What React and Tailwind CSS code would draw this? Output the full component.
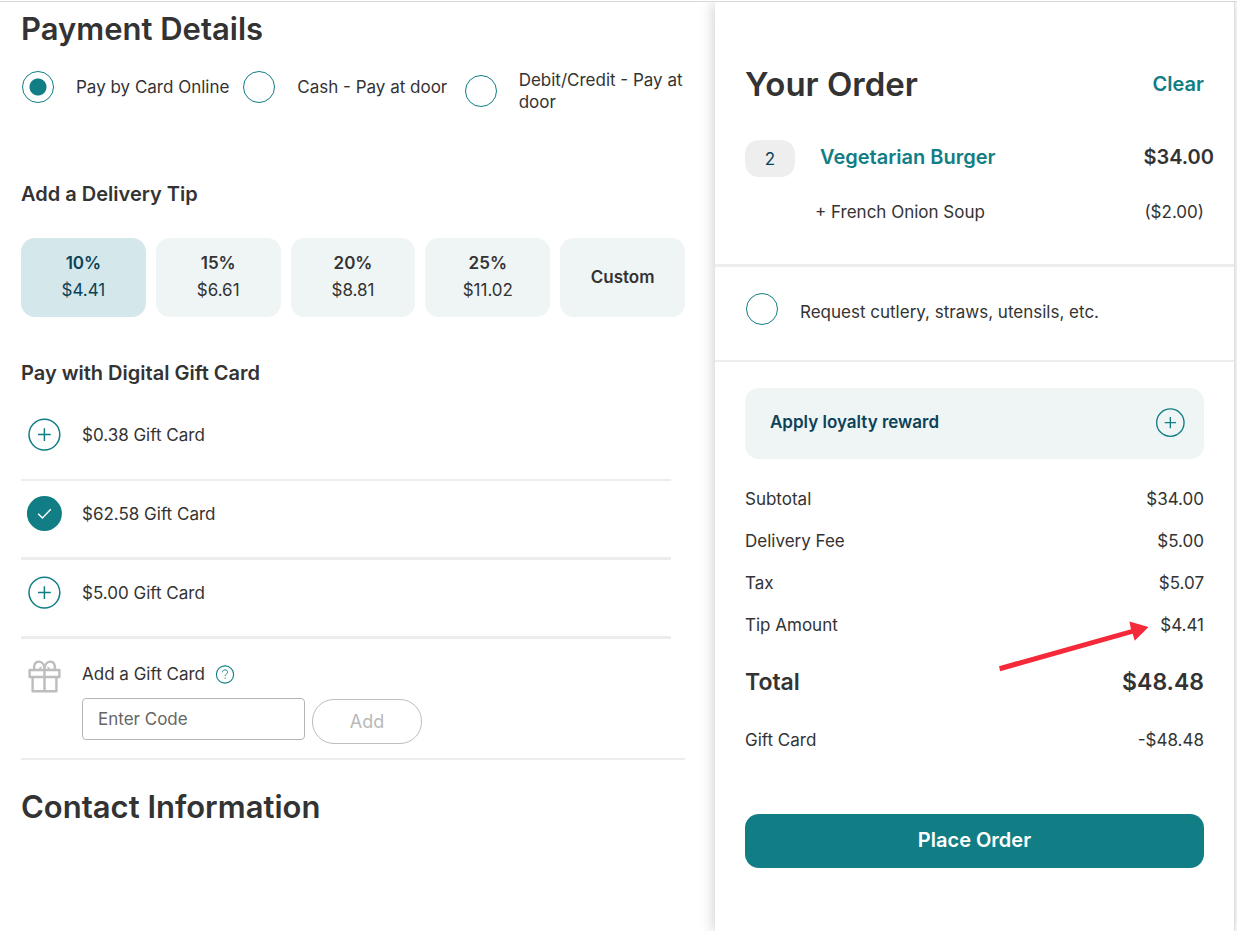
import { useState } from "react";

const paymentMethods = ["Pay by Card Online", "Cash - Pay at door", "Debit/Credit - Pay at door"];

const tips = [
  { label: "10%", amount: "$4.41" },
  { label: "15%", amount: "$6.61" },
  { label: "20%", amount: "$8.81" },
  { label: "25%", amount: "$11.02" },
  { label: "Custom" },
];

const giftCards = ["$0.38 Gift Card", "$62.58 Gift Card", "$5.00 Gift Card"];

const charges = [
  { label: "Subtotal", amount: "$34.00" },
  { label: "Delivery Fee", amount: "$5.00" },
  { label: "Tax", amount: "$5.07" },
  { label: "Tip Amount", amount: "$4.41", flagged: true },
];

function PlusCircle({ className }) {
  return (
    <svg className={className} viewBox="0 0 36 36" fill="none" stroke="#117d84" aria-hidden="true">
      <circle cx="18.4" cy="17.6" r="15.4" strokeWidth="1.5" />
      <path d="M18.4 11.2v12.8M12 17.6h12.8" strokeWidth="1.5" />
    </svg>
  );
}

function CheckCircle({ className }) {
  return (
    <svg className={className} viewBox="0 0 36 36" fill="none" aria-hidden="true">
      <circle cx="18.4" cy="17.5" r="17.5" fill="#117d84" />
      <path d="M12.2 17.7l4.2 4.4 8.4-8.8" stroke="#fff" strokeWidth="1.4" />
    </svg>
  );
}

function GiftIcon() {
  return (
    <svg className="h-9 w-9 shrink-0" viewBox="0 0 36 36" fill="none" stroke="#bdbdbd" strokeWidth="2.4" strokeLinejoin="round" aria-hidden="true">
      <rect x="3.6" y="12" width="29.8" height="7" />
      <path d="M6.6 19v14.2h23.8V19M18.5 12v21.2" />
      <path d="M8.6 12C6.8 7.800 9.200 3.600 12.800 3.600c3.400 0 5.700 3.600 5.700 8.400M28.400 12c1.800-4.200-.6-8.400-4.200-8.400-3.400 0-5.700 3.600-5.700 8.400" />
      <path d="M13.400 11.800c.2-1.400.9-2.200 2.200-2.500M23.600 11.800c-.2-1.400-.9-2.200-2.200-2.500" strokeWidth="1.400" />
    </svg>
  );
}

function HelpIcon() {
  return (
    <svg className="h-5 w-5" viewBox="0 0 20 20" fill="none" stroke="#117d84" aria-hidden="true">
      <circle cx="10" cy="10.500" r="8.600" strokeWidth="1.100" />
      <path d="M7.400 8.300c0-1.500 1.100-2.400 2.600-2.400s2.600.9 2.600 2.300c0 1.900-2.500 1.900-2.500 3.900" strokeWidth="0.900" />
      <path d="M10.100 13.500v1.200" strokeWidth="1" />
    </svg>
  );
}

function Arrow() {
  return (
    <svg
      className="pointer-events-none absolute top-4 right-[55px] h-[52px] w-[150px]"
      viewBox="0 0 150 52"
      fill="#f5293a"
      aria-hidden="true"
    >
      <path d="M0 46.200L132 9.200 130.400 1.600 149.500 7 135.700 20.800 133.700 13.800 1.200 51.200z" />
    </svg>
  );
}

const ring =
  "h-8 w-8 shrink-0 cursor-pointer appearance-none rounded-full border border-[#117d84] bg-white checked:bg-[radial-gradient(circle,#117d84_8px,transparent_9px)]";

function PaymentDetails() {
  const [method, setMethod] = useState(0);
  const [tip, setTip] = useState(0);
  const [card, setCard] = useState(1);

  return (
    <main className="min-w-0 pt-[7px] pr-[30px] pl-[21px]">
      <h1 className="text-[31px] leading-10 font-semibold">Payment Details</h1>

      <div className="mt-5 grid grid-cols-3 items-start" role="radiogroup" aria-label="Payment method">
        {paymentMethods.map((name, i) => (
          <label key={name} className="flex min-h-9 items-center gap-[22px] pl-px leading-[22px]">
            <input type="radio" name="method" className={ring} checked={method === i} onChange={() => setMethod(i)} />
            <span>{name}</span>
          </label>
        ))}
      </div>

      <h2 className="mt-[67px] text-[20px] leading-7 font-semibold">Add a Delivery Tip</h2>
      <div className="mt-[30px] grid grid-cols-5 gap-2.5">
        {tips.map((t, i) => (
          <button
            key={t.label}
            type="button"
            aria-pressed={tip === i}
            onClick={() => setTip(i)}
            className={
              "flex h-[79px] flex-col items-center justify-center rounded-[14px] pb-px leading-[27px] " +
              (tip === i ? "bg-[#d4e7ea] text-[#0c4258]" : "bg-[#eff5f5]")
            }
          >
            <span className="font-semibold">{t.label}</span>
            {t.amount && <span>{t.amount}</span>}
          </button>
        ))}
      </div>

      <h2 className="mt-[42px] text-[20px] leading-7 font-semibold">Pay with Digital Gift Card</h2>
      <ul className="mt-[15px] mr-3.5">
        {giftCards.map((name, i) => (
          <li
            key={name}
            className={
              "flex h-[79px] items-start gap-5 border-[#ededed] pt-[15px] pl-[5px] leading-9 " +
              (i === 0 ? "border-b-2" : "border-b-3")
            }
          >
            <button type="button" aria-label={"Use " + name} aria-pressed={card === i} onClick={() => setCard(i)}>
              {card === i ? <CheckCircle className="h-9 w-9" /> : <PlusCircle className="h-9 w-9" />}
            </button>
            <span>{name}</span>
          </li>
        ))}
      </ul>

      <div className="flex gap-5 border-b-2 border-[#ededed] pt-[19px] pb-3.5 pl-[5px]">
        <GiftIcon />
        <div>
          <div className="flex items-center gap-2.5 pt-0.5 leading-7">
            <label htmlFor="gift-code">Add a Gift Card</label>
            <button type="button" aria-label="Gift card help">
              <HelpIcon />
            </button>
          </div>
          <div className="mt-2.5 flex items-start gap-[7px]">
            <input
              id="gift-code"
              type="text"
              placeholder="Enter Code"
              className="h-[42px] w-[223px] rounded-[4px] border border-[#b5b5b5] px-[15px] placeholder:text-[#666]"
            />
            <button
              type="button"
              disabled
              className="mt-px h-[45px] w-[110px] rounded-[22px] border border-[#bdbdbd] text-[18px] text-[#b8b8b8]"
            >
              Add
            </button>
          </div>
        </div>
      </div>

      <h1 className="mt-[27px] text-[31px] leading-10 font-semibold">Contact Information</h1>
    </main>
  );
}

function OrderPanel() {
  const [cutlery, setCutlery] = useState(false);

  return (
    <aside className="mr-0.5 border-r border-[#dedede] bg-white shadow-[-1px_0_14px_rgba(0,0,0,0.2)]">
      <section className="px-[30px] pt-[62px] pb-[38px]">
        <div className="flex items-center justify-between">
          <h1 className="text-[33px] leading-10 font-semibold">Your Order</h1>
          <button type="button" className="text-[20px] font-semibold text-[#117d84]">
            Clear
          </button>
        </div>
        <div className="mt-9 -mr-2.5 flex items-start leading-[34px]">
          <button type="button" aria-label="Quantity 2" className="h-[37px] w-[50px] rounded-[14px] bg-[#eee] text-[#0c4258]">
            2
          </button>
          <a href="#vegetarian-burger" className="ml-[25px] flex-1 text-[20px] font-semibold text-[#117d84]">
            Vegetarian Burger
          </a>
          <span className="text-[20px] font-semibold">$34.00</span>
        </div>
        <div className="mt-[21px] flex justify-between pl-[70px] leading-7">
          <span>+ French Onion Soup</span>
          <span>($2.00)</span>
        </div>
      </section>

      <section className="border-t-3 border-b-2 border-[#ededed] px-[30px] pt-[26px] pb-[29px]">
        <label className="flex items-start gap-[22px] pl-px leading-[38px]">
          <input
            type="checkbox"
            className={ring}
            checked={cutlery}
            onChange={(e) => setCutlery(e.target.checked)}
          />
          <span>Request cutlery, straws, utensils, etc.</span>
        </label>
      </section>

      <section className="px-[30px] pt-[26px] pb-16">
        <button
          type="button"
          className="flex h-[71px] w-full items-center justify-between rounded-[14px] bg-[#eff5f5] pr-[18px] pb-0.5 pl-[25px] font-semibold text-[#0c4258]"
        >
          <span>Apply loyalty reward</span>
          <PlusCircle className="h-8 w-8" />
        </button>

        <dl className="mt-[19px]">
          {charges.map((c) => (
            <div key={c.label} className="relative flex justify-between leading-[42px]">
              <dt>{c.label}</dt>
              <dd>{c.amount}</dd>
              {c.flagged && <Arrow />}
            </div>
          ))}
          <div className="mt-4 flex justify-between text-[23px] leading-10 font-semibold">
            <dt>Total</dt>
            <dd>$48.48</dd>
          </div>
          <div className="mt-[17px] flex justify-between leading-[42px]">
            <dt>Gift Card</dt>
            <dd>-$48.48</dd>
          </div>
        </dl>

        <button
          type="button"
          className="mt-[53px] h-[54px] w-full rounded-[14px] bg-[#117d84] pb-0.5 text-[20px] font-semibold text-white"
        >
          Place Order
        </button>
      </section>
    </aside>
  );
}

export default function App() {
  return (
    <div className="flex min-h-screen flex-col overflow-hidden bg-white pt-px font-['Inter',sans-serif] text-[17px] text-[#333]">
      <div className="grid flex-1 grid-cols-[minmax(0,1fr)_522px] overflow-hidden border-t border-[#d3d9d8]">
        <PaymentDetails />
        <OrderPanel />
      </div>
    </div>
  );
}
